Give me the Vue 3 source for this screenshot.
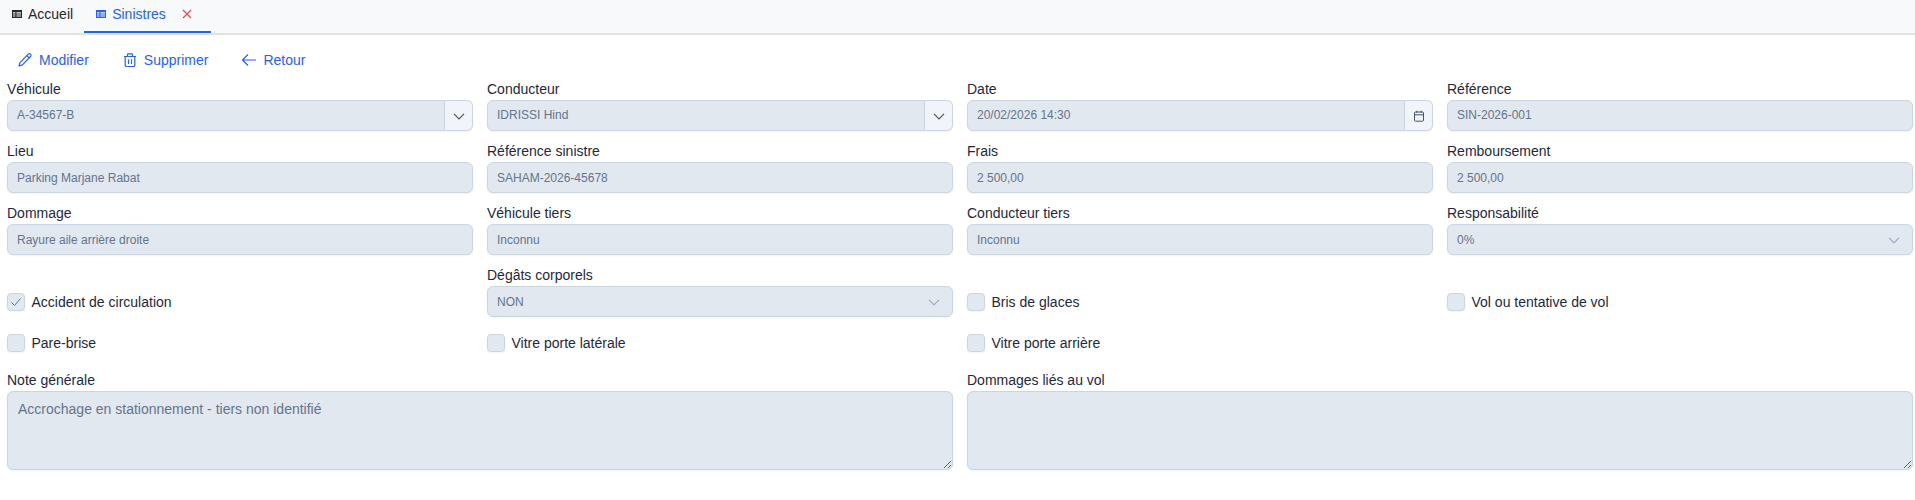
<script setup>
const rows = [
  { label: 'Véhicule', value: 'A-34567-B', addon: 'chevron', up: true },
  { label: 'Conducteur', value: 'IDRISSI Hind', addon: 'chevron', up: true },
  { label: 'Date', value: '20/02/2026 14:30', addon: 'calendar', up: true },
  { label: 'Référence', value: 'SIN-2026-001', up: true },
  { label: 'Lieu', value: 'Parking Marjane Rabat' },
  { label: 'Référence sinistre', value: 'SAHAM-2026-45678' },
  { label: 'Frais', value: '2 500,00' },
  { label: 'Remboursement', value: '2 500,00' },
  { label: 'Dommage', value: 'Rayure aile arrière droite' },
  { label: 'Véhicule tiers', value: 'Inconnu' },
  { label: 'Conducteur tiers', value: 'Inconnu' },
  { label: 'Responsabilité', value: '0%', inner: true },
  { check: 'Accident de circulation', checked: true },
  { label: 'Dégâts corporels', value: 'NON', inner: true },
  { check: 'Bris de glaces' },
  { check: 'Vol ou tentative de vol' },
  { check: 'Pare-brise', raised: true },
  { check: 'Vitre porte latérale', raised: true },
  { check: 'Vitre porte arrière', raised: true },
  { empty: true },
]
</script>

<template>
  <div class="page">
    <div class="tabs">
      <div class="tab">
        <svg class="tab-icon" viewBox="0 0 10 10"><path fill="currentColor" fill-rule="evenodd" d="M0 1h10v8H0zM1 3.2v1.3h2.4V3.2zM4.4 3.2v1.3H9V3.2zM1 5.4v1.2h2.4V5.4zM4.4 5.4v1.2H9V5.4zM1 7.4V8h2.4v-.6zM4.4 7.4V8H9v-.6z"/></svg>
        <span>Accueil</span>
      </div>
      <div class="tab active">
        <svg class="tab-icon" viewBox="0 0 10 10"><path fill="currentColor" fill-rule="evenodd" d="M0 1h10v8H0zM1 3.2v1.3h2.4V3.2zM4.4 3.2v1.3H9V3.2zM1 5.4v1.2h2.4V5.4zM4.4 5.4v1.2H9V5.4zM1 7.4V8h2.4v-.6zM4.4 7.4V8H9v-.6z"/></svg>
        <span>Sinistres</span>
        <svg class="close" viewBox="0 0 10 10"><path d="M1 1l8 8M9 1l-8 8" stroke="currentColor" stroke-width="1.1" fill="none"/></svg>
      </div>
    </div>

    <div class="toolbar">
      <button class="action">
        <svg viewBox="0 0 16 16" width="16" height="16" fill="none" stroke="currentColor" stroke-width="1.2" stroke-linejoin="round"><path d="M11.2 2.2a1.6 1.6 0 0 1 2.3 2.3L5.4 12.9 2 14l1-3.4z"/><path d="M9.9 3.6l2.4 2.4"/></svg>
        <span>Modifier</span>
      </button>
      <button class="action">
        <svg viewBox="0 0 16 16" width="16" height="16" fill="none" stroke="currentColor" stroke-width="1.2" stroke-linejoin="round"><path d="M2 4.5h12M5.5 4.5V2.6a.8.8 0 0 1 .8-.8h3.4a.8.8 0 0 1 .8.8v1.9M3.2 4.5v8.7a1.3 1.3 0 0 0 1.3 1.3h7a1.3 1.3 0 0 0 1.3-1.3V4.5M6.5 7.3v4.6M9.5 7.3v4.6"/></svg>
        <span>Supprimer</span>
      </button>
      <button class="action">
        <svg viewBox="0 0 16 16" width="16" height="16" fill="none" stroke="currentColor" stroke-width="1.2" stroke-linejoin="round"><path d="M15 8H1.5M7 2.5L1.5 8 7 13.5"/></svg>
        <span>Retour</span>
      </button>
    </div>

    <div class="form">
      <template v-for="(r, i) in rows" :key="i">
        <div v-if="r.empty"></div>
        <label v-else-if="r.check" class="check" :class="{ raised: r.raised }">
          <span class="box">
            <svg v-if="r.checked" viewBox="0 0 14 14" width="14" height="14" fill="none" stroke="#64748b" stroke-width="1"><path d="M2.5 7.5l3 3 6-7"/></svg>
          </span>
          <span>{{ r.check }}</span>
        </label>
        <div v-else class="field">
          <div class="label">{{ r.label }}</div>
          <div class="control" :class="{ grouped: r.addon }">
            <input class="input" :class="{ up: r.up }" :value="r.value" readonly />
            <span v-if="r.inner" class="inner-icon">
              <svg viewBox="0 0 12 12" width="12" height="12" fill="none" stroke="currentColor" stroke-width="1.1"><path d="M1 3.8l5 5 5-5"/></svg>
            </span>
            <span v-if="r.addon" class="addon">
              <svg v-if="r.addon === 'chevron'" viewBox="0 0 12 12" width="12" height="12" fill="none" stroke="currentColor" stroke-width="1.2"><path d="M1 3.8l5 5 5-5"/></svg>
              <svg v-else viewBox="0 0 12 12" width="12" height="12" fill="none" stroke="currentColor" stroke-width="1"><rect x="1.5" y="2" width="9" height="9.2" rx="1"/><path d="M1.5 4.8h9M3.8.8v2M8.2.8v2"/></svg>
            </span>
          </div>
        </div>
      </template>
      <div class="field wide">
        <div class="label">Note générale</div>
        <textarea class="area" readonly>Accrochage en stationnement - tiers non identifié</textarea>
      </div>
      <div class="field wide">
        <div class="label">Dommages liés au vol</div>
        <textarea class="area" readonly></textarea>
      </div>
    </div>
  </div>
</template>

<style>
html, body { margin: 0; background: #fff; }
</style>

<style scoped>
.page {
  font-family: "Liberation Sans", Arial, sans-serif;
  font-size: 14px;
  color: #1e293b;
  height: 500px;
  overflow: hidden;
}
.tabs {
  display: flex;
  height: 33px;
  background: #f8f9fa;
  border-bottom: 2px solid #e2e2e2;
}
.tab {
  display: flex;
  align-items: center;
  gap: 6px;
  height: 33px;
  box-sizing: border-box;
  padding: 0 12px 5px;
  color: #27272a;
}
.tab.active {
  color: #2563eb;
  border-bottom: 2px solid #2563eb;
  padding-bottom: 3px;
  margin-left: -1px;
  width: 127px;
}
.tab-icon { width: 10px; height: 10px; flex: none; }
.close { width: 10px; height: 10px; color: #ef4444; margin-left: 10px; }
.toolbar {
  display: flex;
  align-items: center;
  gap: 33px;
  height: 46px;
  box-sizing: border-box;
  padding: 4px 0 0 17px;
}
.action {
  display: flex;
  align-items: center;
  gap: 6px;
  padding: 0;
  border: 0;
  background: none;
  font: inherit;
  color: #2563eb;
}
.form {
  display: grid;
  grid-template-columns: repeat(4, 466px);
  column-gap: 14px;
  row-gap: 12px;
  padding-left: 7px;
  align-items: end;
}
.wide { grid-column: span 2; }
.label { height: 19px; line-height: 16px; }
.control {
  position: relative;
  display: flex;
  height: 31px;
  box-sizing: border-box;
}
.input {
  flex: 1;
  min-width: 0;
  box-sizing: border-box;
  height: 31px;
  padding: 0 9px;
  font: 12px "Liberation Sans", Arial, sans-serif;
  color: #64748b;
  background: #e2e8f0;
  border: 1px solid #cbd5e1;
  border-radius: 6px;
  outline: none;
  box-shadow: 0 1px 2px rgba(18, 18, 23, 0.05);
}
.input.up { padding-bottom: 2px; }
.grouped .input { border-radius: 6px 0 0 6px; }
.addon {
  display: flex;
  align-items: center;
  justify-content: center;
  width: 28px;
  flex: none;
  box-sizing: border-box;
  background: #f1f5f9;
  border: 1px solid #cbd5e1;
  border-left: 0;
  border-radius: 0 6px 6px 0;
  color: #475569;
  box-shadow: 0 1px 2px rgba(18, 18, 23, 0.05);
}
.inner-icon {
  position: absolute;
  top: 0;
  right: 13px;
  height: 31px;
  display: flex;
  align-items: center;
  color: #94a3b8;
}
.check {
  display: flex;
  align-items: center;
  gap: 6.5px;
  height: 31px;
  box-sizing: border-box;
}
.check.raised { padding-bottom: 3px; }
.box {
  display: flex;
  align-items: center;
  justify-content: center;
  width: 18px;
  height: 18px;
  box-sizing: border-box;
  background: #e2e8f0;
  border: 1px solid #cbd5e1;
  border-radius: 4px;
  box-shadow: 0 1px 2px rgba(18, 18, 23, 0.05);
}
.area {
  display: block;
  width: 100%;
  height: 79px;
  box-sizing: border-box;
  padding: 9px 10px;
  font: 14px "Liberation Sans", Arial, sans-serif;
  color: #64748b;
  background: #e2e8f0;
  border: 1px solid #cbd5e1;
  border-radius: 6px;
  outline: none;
  box-shadow: 0 1px 2px rgba(18, 18, 23, 0.05);
}
</style>
